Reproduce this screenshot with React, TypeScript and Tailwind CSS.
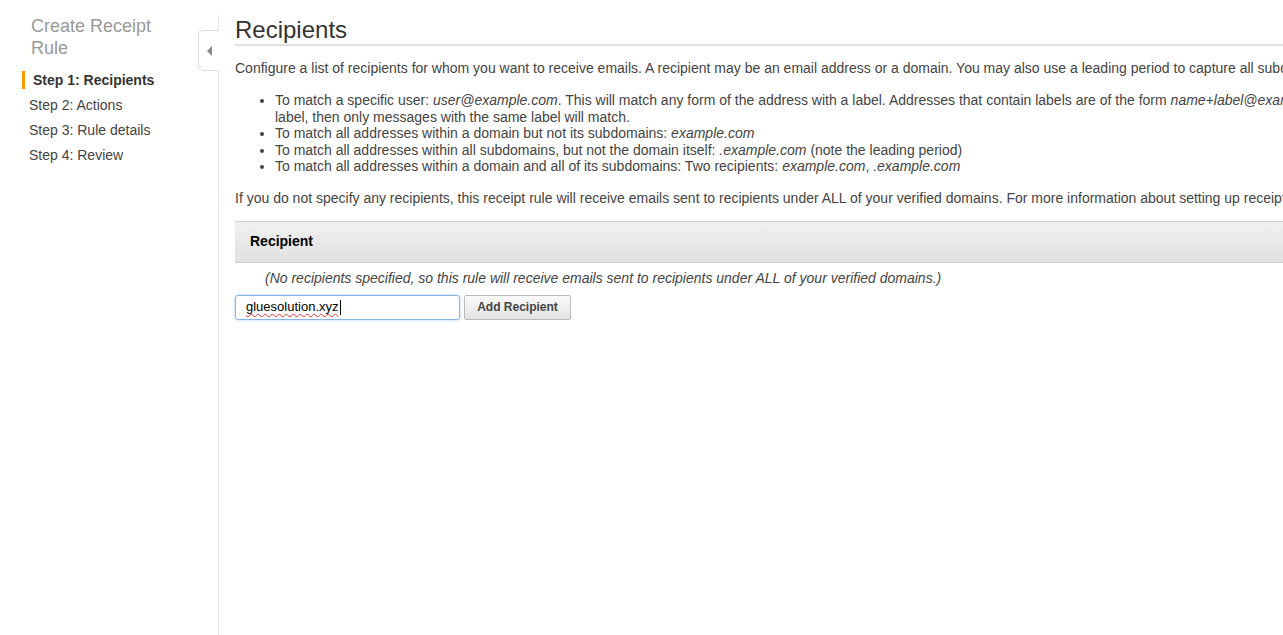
const steps = ['Step 2: Actions', 'Step 3: Rule details', 'Step 4: Review'];

export default function App() {
  return (
    <div className="flex h-[635px] w-[1283px] overflow-hidden bg-white font-['Liberation_Sans',Arial,sans-serif] text-[14px] text-[#444]">
      {/* Sidebar */}
      <div className="relative mt-[15px] w-[219px] shrink-0 border-r border-[#e6e6e6]">
        <h2 className="ml-[31px] text-[18px] leading-[22px] text-[#999]">
          Create Receipt
          <br />
          Rule
        </h2>
        <div className="mt-[12px] ml-[22px] flex h-[18px] items-center border-l-[3px] border-[#f90] pl-[8px] font-bold text-[#333]">
          Step 1: Recipients
        </div>
        <ul className="mt-[7px] ml-[29px]">
          {steps.map((s) => (
            <li key={s} className="h-[25px] leading-[18px]">
              {s}
            </li>
          ))}
        </ul>
        <div className="absolute top-[15px] -right-[1px] flex h-[41px] w-[21px] items-center justify-center rounded-l-[5px] border border-r-0 border-[#ddd] bg-white">
          <div className="h-0 w-0 border-y-[5px] border-r-[5px] border-y-transparent border-r-[#888]" />
        </div>
      </div>

      {/* Main */}
      <div className="w-[1405px] shrink-0 pl-[16px]">
        <h1 className="mt-[16px] border-b-2 border-[#e1e1e1] text-[24px] leading-[28px] text-[#333]">Recipients</h1>
        <p className="mt-[14px] leading-[16px]">
          Configure a list of recipients for whom you want to receive emails. A recipient may be an email address or a domain. You may also use a leading period to capture all subdomains.
        </p>
        <ul className="mt-[16px] ml-[40px] list-disc leading-[16.5px]">
          <li>
            To match a specific user: <i>user@example.com</i>. This will match any form of the address with a label. Addresses that contain labels are of the form <i>name+label@example.com</i>. If you specify an address that contains a label, then only messages with the same label will match.
          </li>
          <li>
            To match all addresses within a domain but not its subdomains: <i>example.com</i>
          </li>
          <li>
            To match all addresses within all subdomains, but not the domain itself: <i>.example.com</i> (note the leading period)
          </li>
          <li>
            To match all addresses within a domain and all of its subdomains: Two recipients: <i>example.com</i>, <i>.example.com</i>
          </li>
        </ul>
        <p className="mt-[15px] leading-[16px]">
          If you do not specify any recipients, this receipt rule will receive emails sent to recipients under ALL of your verified domains. For more information about setting up receipt rules, see the Developer Guide.
        </p>
        <div className="mt-[15px] flex h-[42px] items-center border-y border-[#ccc] bg-gradient-to-b from-[#f0f0f0] to-[#e1e1e1] pl-[15px] font-bold text-black">
          Recipient
        </div>
        <p className="mt-[7px] pl-[30px] italic leading-[16px]">
          (No recipients specified, so this rule will receive emails sent to recipients under ALL of your verified domains.)
        </p>
        <div className="mt-[9px] flex items-center gap-[4px]">
          <div className="flex h-[25px] w-[225px] items-center rounded-[3px] border border-[#8ab4e0] pl-[10px] text-[13px] text-black shadow-[0_0_3px_rgba(82,168,236,0.5)]">
            <span className="underline decoration-wavy decoration-[#e33] decoration-1 underline-offset-2">gluesolution.xyz</span>
            <span className="ml-[1px] h-[15px] w-px bg-black" />
          </div>
          <button className="h-[25px] w-[107px] rounded-[2px] border border-[#bbb] bg-gradient-to-b from-[#fafafa] to-[#e3e3e3] text-[12px] font-bold text-[#444]">
            Add Recipient
          </button>
        </div>
      </div>
    </div>
  );
}
